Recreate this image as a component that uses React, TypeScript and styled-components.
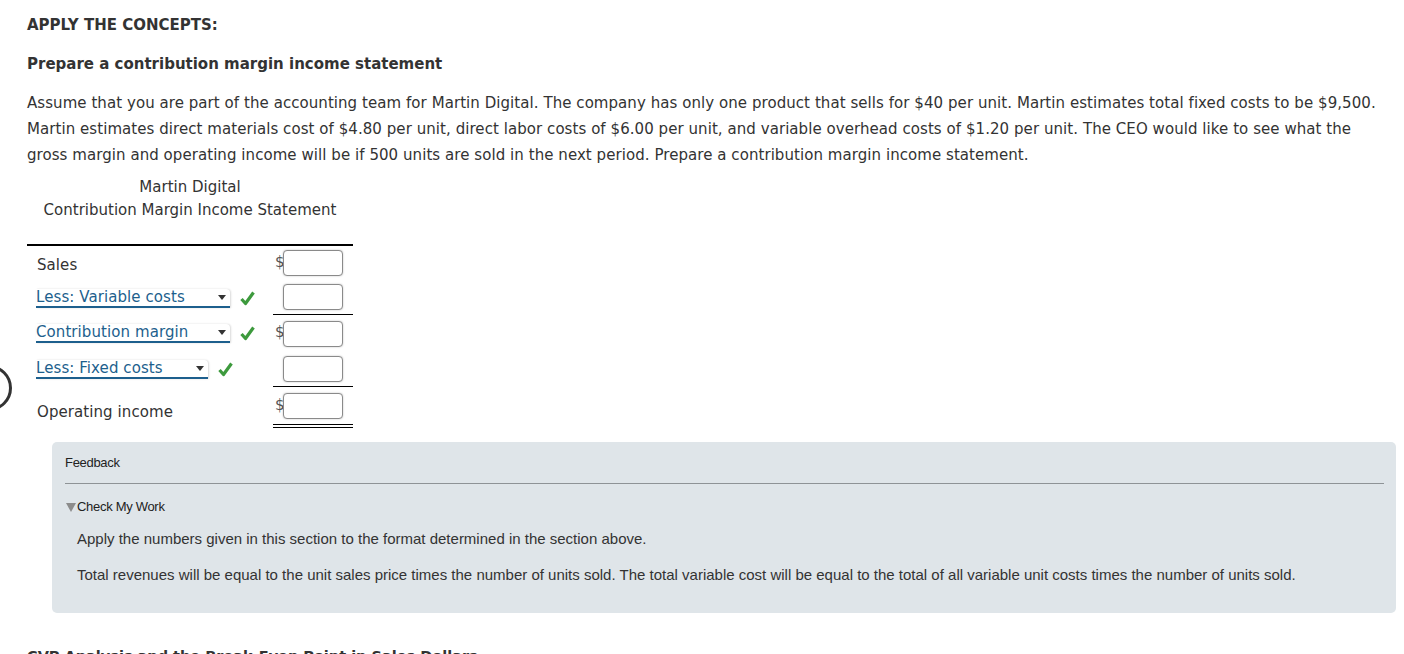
import styled, { createGlobalStyle } from "styled-components";

const GlobalStyle = createGlobalStyle`
  body {
    margin: 0;
    background: #ffffff;
    color: #333333;
    font-family: "DejaVu Sans", Verdana, sans-serif;
  }
`;

const Page = styled.div`
  position: relative;
  padding: 14px 8px 0 27px;
  width: 1404px;
  box-sizing: border-box;
  overflow: hidden;
  height: 654px;
`;

const Heading = styled.h3<{ $gap: number }>`
  margin: 0 0 ${(p) => p.$gap}px;
  font-size: 15px;
  font-weight: bold;
  line-height: 22px;
`;

const Paragraph = styled.p`
  margin: 0;
  font-size: 15px;
  line-height: 26px;
  letter-spacing: 0.06px;
  width: 1369px;
`;

const Title = styled.div`
  width: 326px;
  text-align: center;
  font-size: 15px;
  line-height: 23px;
  margin-top: 8px;
`;

const Statement = styled.div`
  width: 326px;
  margin-top: 22px;
  border-top: 2px solid #000;
`;

const Row = styled.div<{ $h: number }>`
  display: grid;
  grid-template-columns: 1fr 80px;
  height: ${(p) => p.$h}px;
`;

const Label = styled.div`
  display: flex;
  align-items: center;
  gap: 10px;
  padding-left: 9px;
  font-size: 15px;
  letter-spacing: 0.08px;
`;

const Plain = styled.span<{ $drop?: number }>`
  padding-left: 1px;
  margin-top: ${(p) => p.$drop || 0}px;
`;

const Select = styled.div<{ $w: number }>`
  display: flex;
  align-items: center;
  justify-content: space-between;
  width: ${(p) => p.$w}px;
  height: 19px;
  box-sizing: border-box;
  background: #fff;
  border-radius: 0 4px 0 0;
  border-bottom: 2px solid #1d5f8d;
  color: #1d5f8d;
  font-size: 15px;
  line-height: 17px;
  padding-right: 4px;
  box-shadow: 1px 0 2px rgba(0, 0, 0, 0.15);
`;

const Caret = styled.span`
  width: 0;
  height: 0;
  border-left: 4px solid transparent;
  border-right: 4px solid transparent;
  border-top: 5px solid #333;
`;

const Amount = styled.div<{ $rule?: "single" | "double" }>`
  display: flex;
  align-items: center;
  padding: 0 8px 0 2px;
  align-self: stretch;
  border-bottom: ${(p) =>
    p.$rule === "single" ? "1px solid #000" : p.$rule === "double" ? "4px double #000" : "none"};
  margin-bottom: ${(p) => (p.$rule ? "1px" : "0")};
`;

const Dollar = styled.span`
  width: 8px;
  font-size: 15px;
  color: #555;
  margin-top: -3px;
`;

const Input = styled.div`
  width: 60px;
  height: 26px;
  box-sizing: border-box;
  border: 1.5px solid #8a8a8a;
  border-radius: 4px;
  background: #fff;
  box-shadow: 0 0 2px rgba(0, 0, 0, 0.25);
`;

const Feedback = styled.div`
  margin: 13px 0 0 25px;
  background: #dfe5e9;
  border-radius: 5px;
  padding: 12px 12px 29px 13px;
  font-family: "Liberation Sans", Arial, sans-serif;
  color: #222;
`;

const FeedbackTitle = styled.div`
  font-size: 13px;
  letter-spacing: -0.3px;
  line-height: 18px;
  padding-bottom: 11px;
  border-bottom: 1px solid #8e9396;
`;

const Toggle = styled.div`
  display: flex;
  align-items: center;
  margin-top: 14px;
  font-size: 13px;
  line-height: 18px;
  letter-spacing: -0.3px;
`;

const Triangle = styled.span`
  width: 0;
  height: 0;
  border-left: 5px solid transparent;
  border-right: 5px solid transparent;
  border-top: 9px solid #8c8c8c;
  margin: 0 1px;
`;

const FeedbackText = styled.p`
  margin: 14px 0 0 12px;
  line-height: 18px;
  font-size: 15px;
  color: #333;
  & + & {
    margin-top: 18px;
  }
`;

const NextHeading = styled.h2`
  margin: 32px 0 0;
  font-size: 14.5px;
  font-weight: bold;
  line-height: 22px;
`;

const Circle = styled.div`
  position: absolute;
  left: -34px;
  top: 365px;
  width: 40px;
  height: 40px;
  border: 3px solid #333;
  border-radius: 50%;
`;

const Check = () => (
  <svg width="15" height="15" viewBox="0 0 15 15">
    <path d="M1.5 8 L5.5 12.5 L13.5 1.5" fill="none" stroke="#3d9a3d" strokeWidth="3.2" strokeLinejoin="round" />
  </svg>
);

type Line = {
  label: string;
  select?: number;
  dollar?: boolean;
  rule?: "single" | "double";
  h: number;
  drop?: number;
};

const lines: Line[] = [
  { label: "Sales", dollar: true, h: 34, drop: 3 },
  { label: "Less: Variable costs", select: 194, rule: "single", h: 36 },
  { label: "Contribution margin", select: 194, dollar: true, h: 35 },
  { label: "Less: Fixed costs", select: 172, rule: "single", h: 37 },
  { label: "Operating income", dollar: true, rule: "double", h: 41, drop: 6 },
];

export default function App() {
  return (
    <>
      <GlobalStyle />
      <Page>
        <Heading $gap={17}>APPLY THE CONCEPTS:</Heading>
        <Heading $gap={15}>Prepare a contribution margin income statement</Heading>
        <Paragraph>
          Assume that you are part of the accounting team for Martin Digital. The company has only one product
          that sells for $40 per unit. Martin estimates total fixed costs to be $9,500. Martin estimates direct
          materials cost of $4.80 per unit, direct labor costs of $6.00 per unit, and variable overhead costs of
          $1.20 per unit. The CEO would like to see what the gross margin and operating income will be if 500
          units are sold in the next period. Prepare a contribution margin income statement.
        </Paragraph>
        <Title>
          Martin Digital
          <br />
          Contribution Margin Income Statement
        </Title>
        <Statement>
          {lines.map((l) => (
            <Row key={l.label} $h={l.h}>
              <Label>
                {l.select ? (
                  <>
                    <Select $w={l.select}>
                      {l.label}
                      <Caret />
                    </Select>
                    <Check />
                  </>
                ) : (
                  <Plain $drop={l.drop}>{l.label}</Plain>
                )}
              </Label>
              <Amount $rule={l.rule}>
                <Dollar>{l.dollar ? "$" : ""}</Dollar>
                <Input />
              </Amount>
            </Row>
          ))}
        </Statement>
        <Feedback>
          <FeedbackTitle>Feedback</FeedbackTitle>
          <Toggle>
            <Triangle />
            Check My Work
          </Toggle>
          <FeedbackText>Apply the numbers given in this section to the format determined in the section above.</FeedbackText>
          <FeedbackText>
            Total revenues will be equal to the unit sales price times the number of units sold. The total variable
            cost will be equal to the total of all variable unit costs times the number of units sold.
          </FeedbackText>
        </Feedback>
        <NextHeading>CVP Analysis and the Break-Even Point in Sales Dollars</NextHeading>
        <Circle />
      </Page>
    </>
  );
}
